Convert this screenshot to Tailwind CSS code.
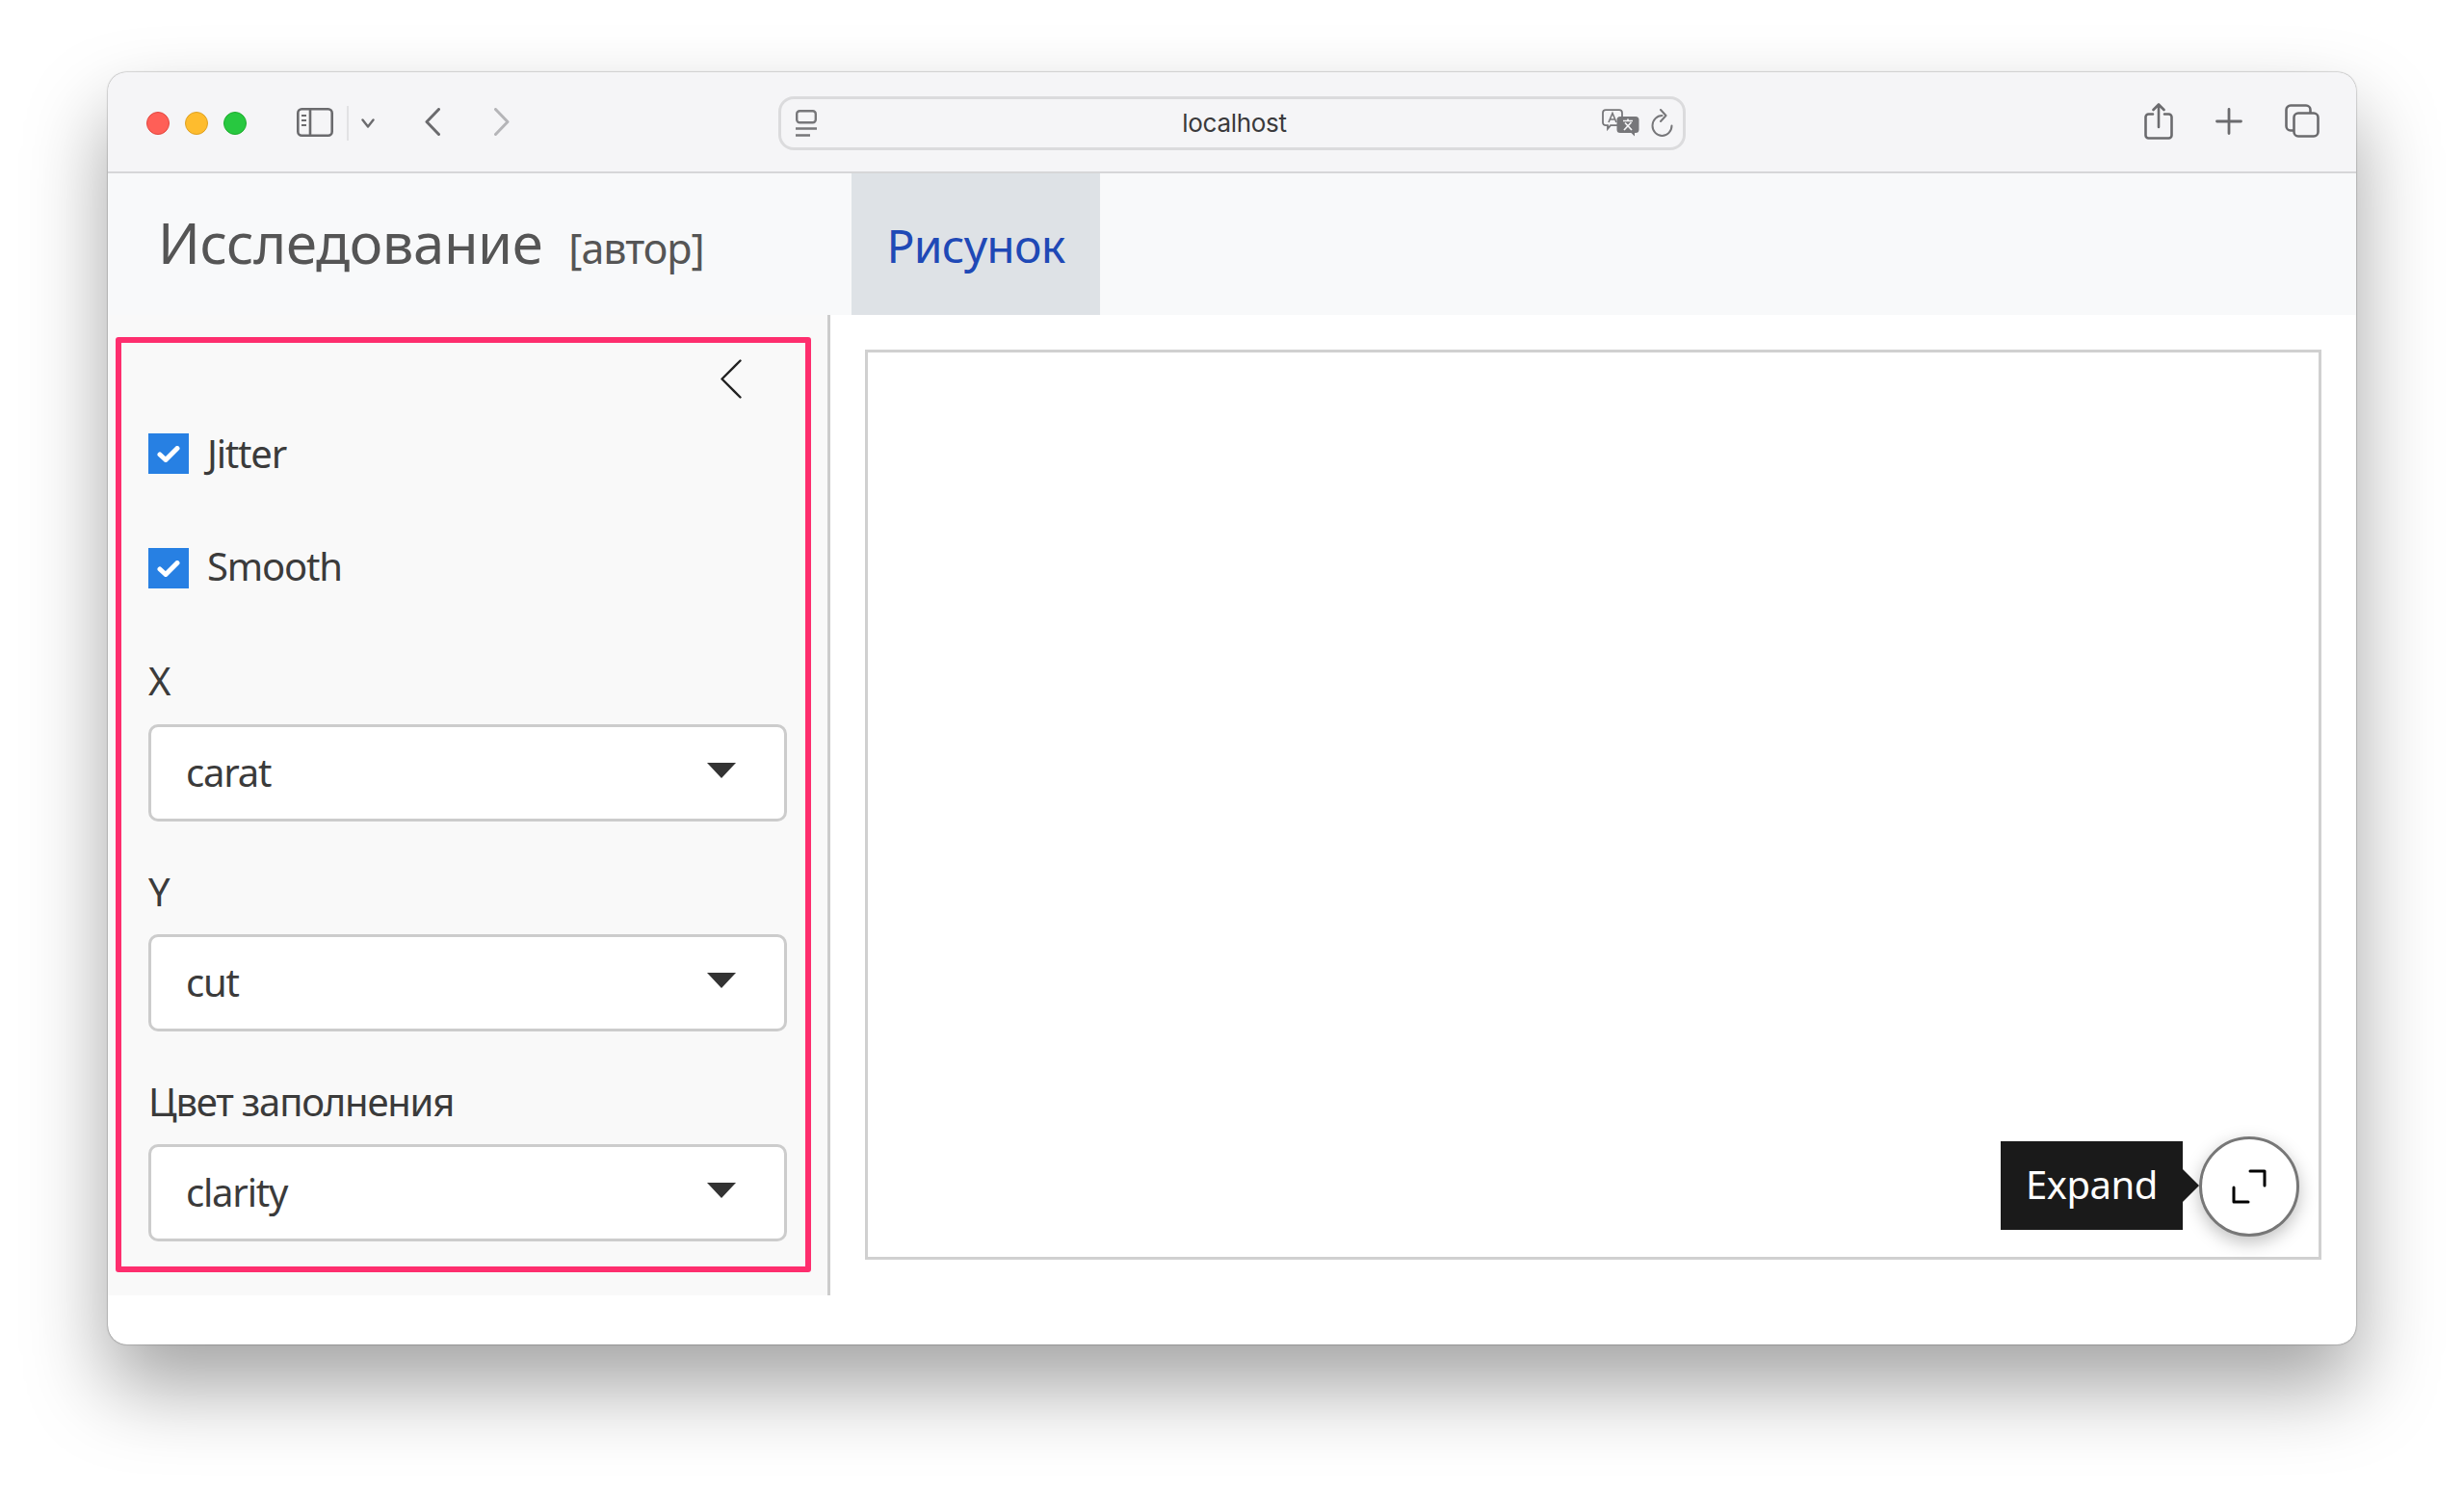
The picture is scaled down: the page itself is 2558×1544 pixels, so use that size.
<!DOCTYPE html>
<html lang="ru">

<head>
    <meta charset="UTF-8">
    <title>localhost</title>
    <script src="https://cdn.jsdelivr.net/npm/@tailwindcss/browser@4"></script>
</head>

<body class="bg-white w-[2558px] h-[1544px] overflow-hidden font-['Noto_Sans',sans-serif]">
    <div class="ml-[112px] mt-[75px] w-[2334px] h-[1321px] flex flex-col rounded-[20px] bg-white overflow-hidden shadow-[0_44px_84px_rgba(0,0,0,0.36),0_0_1.5px_rgba(0,0,0,0.7)] relative">

        <!-- Safari toolbar -->
        <div class="h-[105px] shrink-0 bg-[#f5f5f7] border-b-2 border-[#d6d6d8] relative text-[#6b6b6e]">
            <div class="flex items-center h-full pt-[2px]">
                <div class="flex gap-[16px] ml-[40px]">
                    <div class="w-[24px] h-[24px] rounded-full bg-[#ff5f57] border border-[#e2463f]"></div>
                    <div class="w-[24px] h-[24px] rounded-full bg-[#febc2e] border border-[#dea123]"></div>
                    <div class="w-[24px] h-[24px] rounded-full bg-[#28c840] border border-[#1eac2d]"></div>
                </div>
                <!-- sidebar toggle -->
                <svg class="ml-[52px] -mt-[1px]" width="38" height="30" viewBox="0 0 38 30" fill="none" stroke="#6b6b6e" stroke-width="2.6">
                    <rect x="1.3" y="1.3" width="35.4" height="27.4" rx="4" />
                    <path d="M14 1.3v27.4" />
                    <path d="M5 8h5M5 13h5M5 18h5" stroke-width="2.2" />
                </svg>
                <div class="w-[2px] h-[36px] bg-[#e2e2e4] ml-[14px]"></div>
                <svg class="ml-[13px]" width="14" height="10" viewBox="0 0 14 10" fill="none" stroke="#6b6b6e" stroke-width="2.4" stroke-linecap="round" stroke-linejoin="round">
                    <path d="M1.5 1.5 7 8.5l5.5-7" />
                </svg>
                <svg class="ml-[52px] -mt-[2px]" width="16" height="29" viewBox="0 0 16 29" fill="none" stroke="#6b6b6e" stroke-width="3" stroke-linecap="round" stroke-linejoin="round">
                    <path d="M14.5 1.5 2 14.5l12.5 13" />
                </svg>
                <svg class="ml-[56px] -mt-[2px]" width="16" height="29" viewBox="0 0 16 29" fill="none" stroke="#b5b5b8" stroke-width="3" stroke-linecap="round" stroke-linejoin="round">
                    <path d="M1.5 1.5 14 14.5l-12.5 13" />
                </svg>

                <!-- url bar -->
                <div class="ml-[279px] w-[942px] h-[56px] rounded-[16px] border-[3px] border-[#dbdbdd] flex items-center pl-[15px] pr-[10px]">
                    <svg width="22" height="28" viewBox="0 0 22 28" fill="none" stroke="#77777a">
                        <rect x="1.2" y="1.2" width="19.6" height="12" rx="3" stroke-width="2.4" />
                        <path d="M0 19.5h22M0 26.5h15" stroke-width="2.4" />
                    </svg>
                    <span class="flex-1 text-center text-[26px] leading-none tracking-[-0.3px] text-[#3a3a3c] font-['Inter',sans-serif] pl-[52px] pt-[1px]">localhost</span>
                    <svg width="39" height="29" viewBox="0 0 39 29" fill="none">
                        <path d="M4 1.2h14a3 3 0 0 1 3 3v10a3 3 0 0 1-3 3H9l-3 3.5v-3.5H4a3 3 0 0 1-3-3v-10a3 3 0 0 1 3-3Z" stroke="#77777a" stroke-width="1.8" />
                        <path d="M7 14 11 4.5l4 9.5M8.5 11h5" stroke="#77777a" stroke-width="1.6" />
                        <path d="M19 8h16a3.5 3.5 0 0 1 3.5 3.5v10a3.5 3.5 0 0 1-3.5 3.5h-1v3.5L30.5 25H19a3.5 3.5 0 0 1-3.5-3.5v-10A3.5 3.5 0 0 1 19 8Z" fill="#77777a" />
                        <path d="M22 12.5h10M27 10.5v2M23 22l7.5-8M24 14.5l7 7.5" stroke="#f5f5f7" stroke-width="1.7" />
                    </svg>
                    <svg class="ml-[12px]" width="23" height="29" viewBox="0 0 23 29" fill="none" stroke="#77777a" stroke-width="2" stroke-linecap="round" stroke-linejoin="round">
                        <path d="M11.500 7 A10 10.500 0 1 0 21.500 17.500" />
                        <path d="M10 1l5.500 6-5.500 6" />
                    </svg>
                </div>

                <!-- right buttons -->
                <svg class="ml-[476px] -mt-[3px]" width="30" height="38" viewBox="0 0 30 38" fill="none" stroke="#6b6b6e" stroke-width="2.6" stroke-linecap="round" stroke-linejoin="round">
                    <path d="M9 11.5H4.500a3 3 0 0 0-3 3V33.500a3 3 0 0 0 3 3h21a3 3 0 0 0 3-3V14.500a3 3 0 0 0-3-3H21" />
                    <path d="M15 25V2M9.500 7 15 1.500 20.500 7" />
                </svg>
                <svg class="ml-[44px] -mt-[3px]" width="28" height="28" viewBox="0 0 28 28" fill="none" stroke="#6b6b6e" stroke-width="2.8" stroke-linecap="round">
                    <path d="M14 1.500v25M1.500 14h25" />
                </svg>
                <svg class="ml-[44px] -mt-[4px]" width="36" height="35" viewBox="0 0 36 35" fill="none" stroke="#6b6b6e" stroke-width="2.6">
                    <path d="M9 27.500H6a4.500 4.500 0 0 1-4.500-4.500V6A4.500 4.500 0 0 1 6 1.500h16A4.500 4.500 0 0 1 26.500 6v3" />
                    <rect x="9.500" y="9.500" width="25" height="24" rx="4.500" />
                </svg>
            </div>
        </div>

        <!-- navbar -->
        <div class="h-[147px] shrink-0 bg-[#f8f9fa] flex">
            <div class="w-[772px] pl-[52px] flex items-baseline pt-[41px] text-[#555555]">
                <span class="text-[58px] leading-[62px] tracking-[-0.4px]">Исследование</span>
                <span class="text-[43px] leading-[62px] tracking-[-1px] ml-[27px]">[автор]</span>
            </div>
            <div class="w-[258px] bg-[#dee2e6] flex justify-center pt-[44px]">
                <span class="text-[48px] leading-[62px] tracking-[-0.8px] text-[#1f49b6]">Рисунок</span>
            </div>
        </div>

        <div class="h-[1018px] shrink-0 flex">
            <!-- sidebar -->
            <div class="w-[750px] shrink-0 bg-[#f9f9f9] border-r-[3px] border-[#cccccc] pt-[23px] pl-[8px]">
                <div class="w-[722px] h-[971px] border-[6px] border-[#fe2e6e] rounded-[3px] pl-[28px] pr-[19px] pt-[17px] text-[#3b3b3b] text-[40px] leading-[42px] tracking-[-1.2px]">
                    <div class="flex justify-end pr-[47px] h-[41px]">
                        <svg width="22" height="41" viewBox="0 0 22 41" fill="none" stroke="#222222" stroke-width="2.400" stroke-linecap="round" stroke-linejoin="round">
                            <path d="M20.500 1.500 1.500 20.500l19 19" />
                        </svg>
                    </div>

                    <label class="flex items-center mt-[36px] h-[42px]">
                        <span class="w-[42px] h-[42px] bg-[#2780e3] flex items-center justify-center">
                            <svg width="24" height="17" viewBox="0 0 24 17" fill="none" stroke="#ffffff" stroke-width="5" stroke-linecap="round" stroke-linejoin="round">
                                <path d="M3 9 9 14.500 21 2.500" />
                            </svg>
                        </span>
                        <span class="ml-[19px]">Jitter</span>
                    </label>

                    <label class="flex items-center mt-[77px] h-[42px]">
                        <span class="w-[42px] h-[42px] bg-[#2780e3] flex items-center justify-center">
                            <svg width="24" height="17" viewBox="0 0 24 17" fill="none" stroke="#ffffff" stroke-width="5" stroke-linecap="round" stroke-linejoin="round">
                                <path d="M3 9 9 14.500 21 2.500" />
                            </svg>
                        </span>
                        <span class="ml-[19px] pb-[4px]">Smooth</span>
                    </label>

                    <div class="mt-[75px] h-[44px]">X</div>
                    <div class="mt-[22px] h-[101px] bg-white border-[3px] border-[#cccccc] rounded-[10px] flex items-center pl-[36px] pr-[50px] justify-between">
                        <span class="pb-[2px]">carat</span>
                        <svg class="-mt-[5px]" width="30" height="16" viewBox="0 0 30 16"><path d="M0 0h30L15 16Z" fill="#333333" /></svg>
                    </div>

                    <div class="mt-[52px] h-[44px]">Y</div>
                    <div class="mt-[21px] h-[101px] bg-white border-[3px] border-[#cccccc] rounded-[10px] flex items-center pl-[36px] pr-[50px] justify-between">
                        <span class="pb-[2px]">cut</span>
                        <svg class="-mt-[5px]" width="30" height="16" viewBox="0 0 30 16"><path d="M0 0h30L15 16Z" fill="#333333" /></svg>
                    </div>

                    <div class="mt-[52px] h-[44px]">Цвет заполнения</div>
                    <div class="mt-[21px] h-[101px] bg-white border-[3px] border-[#cccccc] rounded-[10px] flex items-center pl-[36px] pr-[50px] justify-between">
                        <span class="pb-[2px]">clarity</span>
                        <svg class="-mt-[5px]" width="30" height="16" viewBox="0 0 30 16"><path d="M0 0h30L15 16Z" fill="#333333" /></svg>
                    </div>
                </div>
            </div>

            <!-- plot -->
            <div class="flex-1 pt-[36px] pl-[36px] pr-[36px]">
                <div class="relative h-[945px] border-[3px] border-[#d0d0d0] bg-white">
                    <div class="absolute right-[20px] top-[814px] w-[104px] h-[104px] rounded-full bg-white border-[3px] border-[#777777] shadow-[0_6px_18px_rgba(0,0,0,0.25)] flex items-center justify-center">
                        <svg width="36" height="36" viewBox="0 0 36 36" fill="none" stroke="#000000" stroke-width="3" stroke-linecap="round" stroke-linejoin="round">
                            <path d="M19 2h15v15M2 19v15h15" />
                        </svg>
                    </div>
                    <div class="absolute right-[141px] top-[819px] w-[189px] h-[92px] bg-[#1a1a1a] flex items-center justify-center text-white text-[40px] leading-none tracking-[-0.5px]">
                        <span class="pb-[3px]">Expand</span>
                        <div class="absolute -right-[17px] top-[29px] w-0 h-0 border-y-[17px] border-y-transparent border-l-[17px] border-l-[#1a1a1a]"></div>
                    </div>
                </div>
            </div>
        </div>
    </div>
</body>

</html>
